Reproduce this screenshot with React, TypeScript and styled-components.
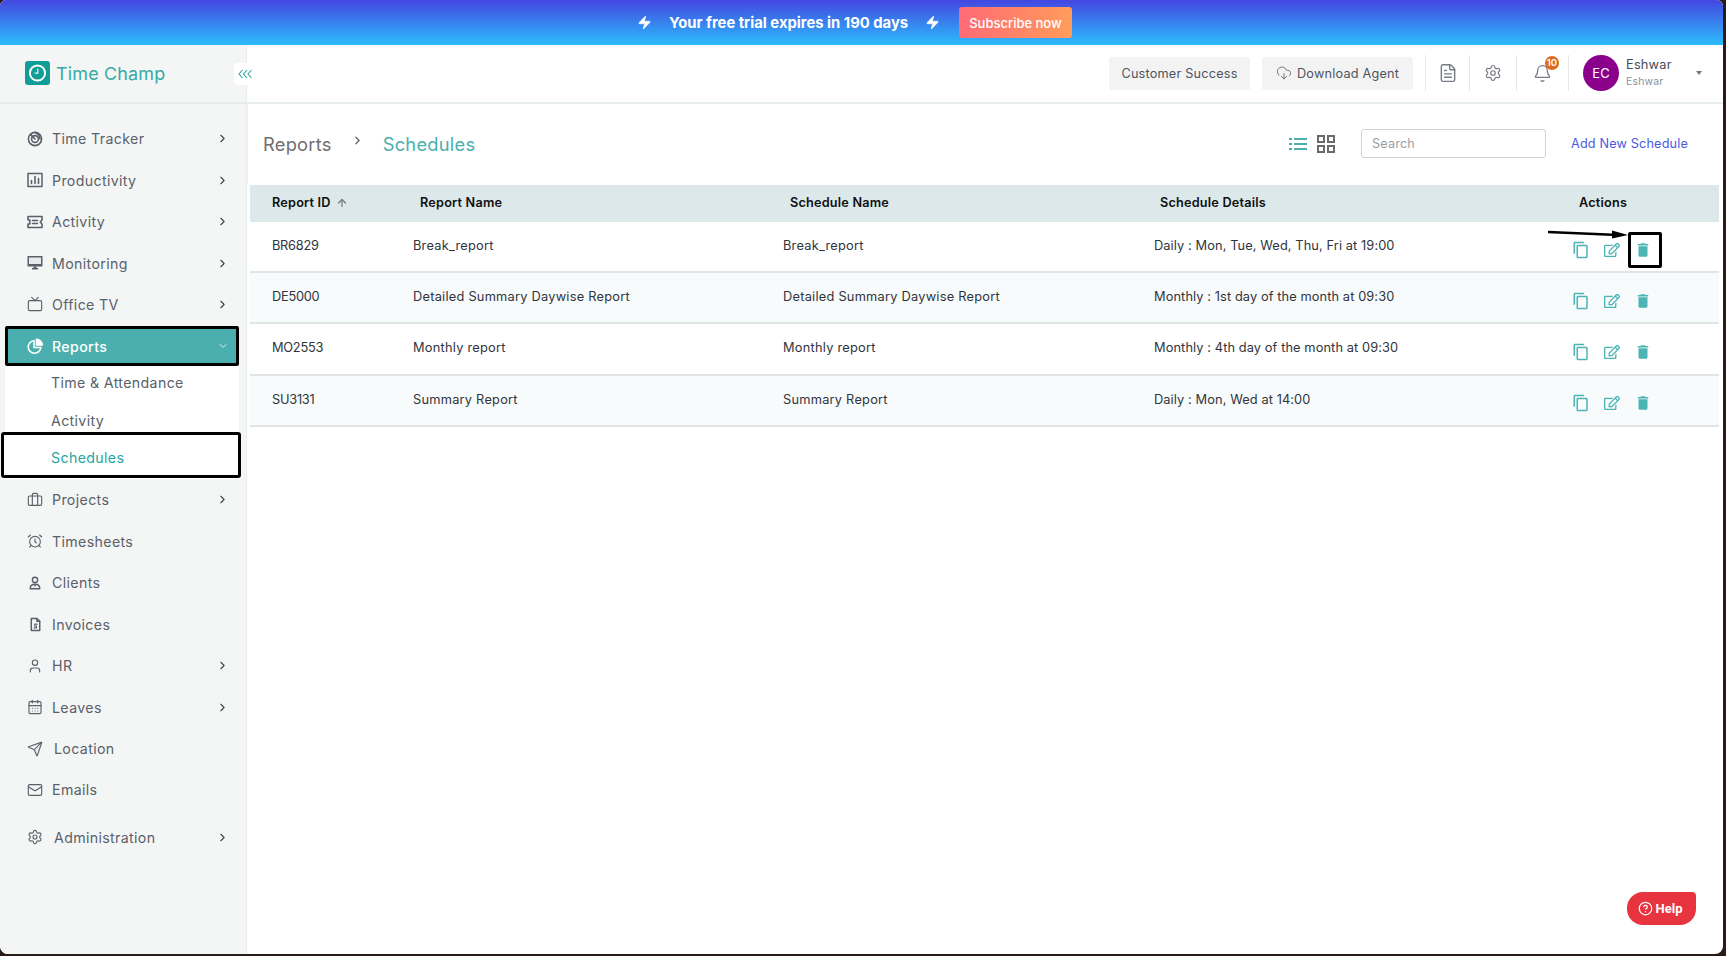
import React from "react";
import styled, { createGlobalStyle } from "styled-components";
import { ChevronRight, ChevronDown, AlarmClock, User, Send, Mail, Tv, Briefcase, CalendarDays, Bell, CloudDownload, FileText, ArrowUp, CircleHelp, Zap, Settings } from "lucide-react";
import { MdOutlineContentCopy, MdDelete } from "react-icons/md";
import { FaRegEdit } from "react-icons/fa";

const Global = createGlobalStyle`
  html, body { margin: 0; padding: 0; height: 100%; background: #2a1a18; overflow: hidden; }
  body { font-family: Inter, "Open Sans", sans-serif; }
  *, *::before, *::after { box-sizing: border-box; }
`;

const Frame = styled.div`
  position: relative; width: 1723px; height: 954px; background: #fff;
  border-radius: 6px 6px 8px 8px; overflow: hidden;
  display: flex; flex-direction: column;
`;
const Banner = styled.div`
  height: 45px; flex: none; background: linear-gradient(180deg, #4347e0 0%, #2cbcfc 100%);
  display: flex; align-items: center; padding-left: 637px; color: #fff;
`;
const BannerText = styled.span`
  font-weight: 700; font-size: 14.8px; width: 238px; margin: 0 18px 0 17px; white-space: nowrap;
`;
const Subscribe = styled.button`
  width: 113px; height: 31px; margin-left: 19px; border: 0; border-radius: 3px; color: #fff;
  font: 500 13px Inter, sans-serif; background: linear-gradient(90deg, #ff6a75, #ff9c5b);
`;
const Body = styled.div`flex: 1; display: flex; min-height: 0;`;
const Sidebar = styled.aside`
  width: 247px; flex: none; background: #f4f6f6; border-right: 1px solid #e8eded; position: relative;
`;
const Brand = styled.div`
  height: 59px; border-bottom: 2px solid #e9eded; display: flex; align-items: center; padding: 0 0 1px 25px; gap: 6px;
  color: #36aaa3; font-size: 17.9px; letter-spacing: .2px;
`;
const Collapse = styled.div`
  position: absolute; left: 234px; top: 18px; width: 23px; height: 22px; background: #fff; border-radius: 4px;
  display: flex; align-items: center; justify-content: center; z-index: 3;
`;
const Nav = styled.nav`padding-top: 14px; display: flex; flex-direction: column;`;
const Item = styled.div<{ $active?: boolean; $gap?: boolean }>`
  height: 41.45px; display: flex; align-items: center; padding: 0 17px 0 27px; font-size: 14.2px; letter-spacing: .35px; flex: none;
  color: ${p => (p.$active ? "#fff" : "#5a616a")};
  margin-top: ${p => (p.$gap ? "6px" : 0)};
  ${p => p.$active && `
    background: #4aafae; margin: 1px 7px 0 5px; height: 40px; position: relative; z-index: 1;
    border: 3px solid #000; border-radius: 2px; font-weight: 500; padding-left: 19px; padding-right: 7px;
  `}
`;
const ItemIcon = styled.span`width: 16px; height: 16px; flex: none; display: flex; align-items: center; justify-content: center;`;
const ItemLabel = styled.span<{ $wide?: boolean }>`flex: 1; margin-left: ${p => (p.$wide ? "11px" : "9px")}; white-space: nowrap;`;
const SubList = styled.div`margin: -2px 7px 0 5px; background: #fff; display: flex; flex-direction: column;`;
const SubItem = styled.div<{ $active?: boolean }>`
  height: 37.5px; display: flex; align-items: center; padding-left: 46px; font-size: 14.2px; letter-spacing: .35px; flex: none;
  color: ${p => (p.$active ? "#27a79f" : "#5a616a")}; position: relative;
  ${p => p.$active && `
    margin: -7px -2px 1px -4px; padding: 5px 0 0 47px; height: 46px; background: #fff;
    border: 3px solid #000; border-radius: 3px;
  `}
`;
const Main = styled.main`flex: 1; min-width: 0; display: flex; flex-direction: column; position: relative;`;
const Topbar = styled.header`
  height: 59px; flex: none; border-bottom: 2px solid #e8eded; display: flex; align-items: center; padding: 0 0 1px 862px;
`;
const TopBtn = styled.div<{ $w: number }>`
  width: ${p => p.$w}px; height: 33px; background: #f3f3f3; border-radius: 3px; margin-right: 12px;
  display: flex; align-items: center; justify-content: center; gap: 5px; font-size: 12.7px; color: #4d5560; white-space: nowrap; letter-spacing: .2px;
`;
const TopIcon = styled.div<{ $w: number }>`
  width: ${p => p.$w}px; height: 36px; border-left: 1px solid #e6e8e8; display: flex; align-items: center; justify-content: center; position: relative;
`;
const Badge = styled.span`
  position: absolute; left: 28px; top: 1px; width: 14px; height: 14px; border-radius: 50%; background: #dd6a1c; color: #fff;
  font-size: 9.5px; font-weight: 600; line-height: 14px; text-align: center;
`;
const UserBox = styled.div`flex: 1; height: 36px; border-left: 1px solid #e6e8e8; display: flex; align-items: center; padding-left: 14px;`;
const Avatar = styled.div`
  width: 36px; height: 36px; border-radius: 50%; background: #8b008b; color: #fff; font-size: 13px;
  display: flex; align-items: center; justify-content: center;
`;
const UserText = styled.div`margin-left: 7px; width: 70px; display: flex; flex-direction: column; gap: 1px;`;
const UserName = styled.div`font-size: 12.8px; color: #444b55; line-height: 16px; letter-spacing: .2px;`;
const UserSub = styled.div`font-size: 10.4px; color: #8d929a; line-height: 15px; letter-spacing: .2px;`;
const Caret = styled.span`width: 0; height: 0; border-left: 3.5px solid transparent; border-right: 3.5px solid transparent; border-top: 4px solid #777;`;
const PageHead = styled.div`
  height: 81px; flex: none; display: flex; align-items: center; padding: 0 35px 2px 15px; margin-left: 1px; box-shadow: -1px 0 0 #eef1f1;
`;
const Crumb = styled.span`font-size: 18.3px; color: #6f6f6f; letter-spacing: .25px;`;
const CrumbActive = styled(Crumb)`color: #48b0ae;`;
const CrumbSep = styled.span`width: 51px; display: flex; justify-content: center; margin-bottom: 6px;`;
const ViewToggles = styled.div`margin-left: auto; display: flex; align-items: center; gap: 10px; margin-right: 26px;`;
const Search = styled.input`
  width: 185px; height: 29px; border: 1px solid #cfd2d4; border-radius: 3px; padding: 0 10px; font: 12.6px Inter, sans-serif; outline: none;
  letter-spacing: .2px;
  &::placeholder { color: #9a9ea3; }
`;
const AddLink = styled.a`margin-left: 25px; font-size: 12.7px; color: #4a5be2; white-space: nowrap; letter-spacing: .15px;`;
const Table = styled.div`margin: 0 4px 0 3px; display: flex; flex-direction: column;`;
const HeadRow = styled.div`
  display: grid; grid-template-columns: 143px 370px 371px 421px 1fr; height: 37px; align-items: center; background: #dce8e9; padding-bottom: 2px;
`;
const HeadCell = styled.div<{ $p: number }>`
  padding-left: ${p => p.$p}px; font-size: 12.7px; font-weight: 600; color: #111; display: flex; align-items: center; gap: 5px; letter-spacing: .2px;
`;
const Row = styled.div<{ $alt?: boolean }>`
  display: grid; grid-template-columns: 143px 370px 371px 421px 1fr; height: 51.2px; border-bottom: 2px solid #e2e5e7; align-items: center;
  background: ${p => (p.$alt ? "#f8fbfb" : "#fff")};
`;
const Cell = styled.div<{ $p: number; $ls?: number }>`
  padding-left: ${p => p.$p}px; padding-bottom: 2px; font-size: 12.8px; color: #30353d; white-space: nowrap;
  letter-spacing: ${p => p.$ls ?? 0.24}px;
`;
const Actions = styled.div`display: flex; align-items: center; padding-left: 17px; gap: 13px; margin-top: 6px; color: #4bb5b5; position: relative;`;
const ActionBtn = styled.span<{ $marked?: boolean }>`
  width: 18px; height: 18px; display: flex; align-items: center; justify-content: center; position: relative;
  ${p => p.$marked && `
    &::after { content: ""; position: absolute; left: -6px; top: -9px; width: 34px; height: 36px; border: 3px solid #000; border-radius: 2px; }
  `}
`;
const Arrow = styled.svg`position: absolute; left: 1301px; pointer-events: none; top: 184px;`;
const Help = styled.div`
  position: absolute; right: 27px; bottom: 29px; width: 69px; height: 33px; background: #e8343f; color: #fff;
  border-radius: 16px 4px 16px 16px; display: flex; align-items: center; justify-content: center; gap: 3px; padding-right: 3px;
  font: 700 13px Roboto, sans-serif;
`;

const s = { fill: "none", stroke: "#5a616a", strokeWidth: 1.6, strokeLinecap: "round" as const, strokeLinejoin: "round" as const };
const Ic = ({ children, size = 16 }: { children: React.ReactNode; size?: number }) => (
  <svg width={size} height={size} viewBox="0 0 16 16" {...s}>{children}</svg>
);
const Radar = () => <Ic><circle cx="8" cy="8" r="6.6" /><circle cx="8" cy="8" r="3.4" /><path d="M3.6 3.6 L8 8 M8 1.4c3 1.500 4.800 4 5 6.600" /></Ic>;
const Bars = () => <Ic><rect x="1" y="1.500" width="14" height="13" strokeWidth="1.500" /><path d="M4.500 11.500V8.500M8 11.500V4.500M11.500 11.500V6.500" /></Ic>;
const Ticket = () => <Ic><path d="M1 2.500h14v3.500l-1.800 2 1.800 2v3.500H1v-3.500h1.800V6H1z" /><path d="M5.500 6.500h5M5.500 9.500h5" /></Ic>;
const Monitor = () => (
  <svg width="16" height="16" viewBox="0 0 16 16"><rect x="0.500" y="1" width="15" height="10.500" rx=".6" fill="#5a616a" /><rect x="2" y="2.500" width="12" height="6.500" fill="#e7eaea" /><path d="M6.500 11.500h3v1.500h1.500v1.500H5V13h1.500z" fill="#5a616a" /></svg>
);
const Pie = () => <svg width="17" height="17" viewBox="0 0 16 16" fill="none" stroke="#fff" strokeWidth="1.600"><path d="M7 2.200a6.300 6.300 0 1 0 6.800 6.800H7z" /><path d="M9.500.8a6 6 0 0 1 5.700 5.700H9.500z" fill="#fff" /></svg>;
const Client = () => <Ic size={14}><circle cx="8" cy="4.500" r="3" /><path d="M2.500 14.500c0-4 2.500-5 5.500-5s5.500 1 5.500 5z" /><path d="M8 9.500v2" /></Ic>;
const Invoice = () => <Ic size={15}><path d="M3.500 1.500h6l3 3v10h-9z" /><path d="M9.500 1.500v3h3" /><path d="M9.700 7.600H7.200v2h1.800v2H6.500" strokeWidth="1.200" /></Ic>;
const Logo = () => (
  <svg width="25" height="25" viewBox="0 0 25 25">
    <rect width="25" height="24" rx="3" fill="#0f9d95" />
    <circle cx="12.500" cy="12" r="7.600" fill="none" stroke="#fff" strokeWidth="2" />
    <path d="M12.800 7.800v4.400H9.600" fill="none" stroke="#e8f6f5" strokeWidth="1.200" />
  </svg>
);
const Triple = () => (
  <svg width="15" height="10" viewBox="0 0 15 10" fill="none" stroke="#2fa9a6" strokeWidth="1.100"><path d="M4.500 1 1 5l3.500 4M9 1 5.500 5 9 9M13.500 1 10 5l3.500 4" /></svg>
);
const ListView = () => (
  <svg width="18" height="14" viewBox="0 0 18 14" fill="#4bb0ac"><rect x="0" y="1" width="3" height="2" /><rect x="5" y="1" width="13" height="2" /><rect x="0" y="6" width="3" height="2" /><rect x="5" y="6" width="13" height="2" /><rect x="0" y="11" width="3" height="2" /><rect x="5" y="11" width="13" height="2" /></svg>
);
const GridView = () => (
  <svg width="18" height="18" viewBox="0 0 18 18" fill="none" stroke="#6b6b6b" strokeWidth="2"><rect x="1" y="1" width="6" height="6" /><rect x="11" y="1" width="6" height="6" /><rect x="1" y="11" width="6" height="6" /><rect x="11" y="11" width="6" height="6" /></svg>
);
const Bolt = () => <Zap size={15} color="#fff" fill="#fff" strokeWidth={1} />;
const Chev = () => <ChevronRight size={13} color="#444" strokeWidth={2} />;

const lu = { size: 16, color: "#5a616a", strokeWidth: 1.7 };
type Entry = { label: string; icon: React.ReactNode; arrow?: boolean; wide?: boolean; gap?: boolean };
const before: Entry[] = [
  { label: "Time Tracker", icon: <Radar />, arrow: true },
  { label: "Productivity", icon: <Bars />, arrow: true },
  { label: "Activity", icon: <Ticket />, arrow: true },
  { label: "Monitoring", icon: <Monitor />, arrow: true },
  { label: "Office TV", icon: <Tv {...lu} />, arrow: true },
];
const after: Entry[] = [
  { label: "Projects", icon: <Briefcase {...lu} />, arrow: true },
  { label: "Timesheets", icon: <AlarmClock {...lu} /> },
  { label: "Clients", icon: <Client /> },
  { label: "Invoices", icon: <Invoice /> },
  { label: "HR", icon: <User {...lu} />, arrow: true },
  { label: "Leaves", icon: <CalendarDays {...lu} />, arrow: true },
  { label: "Location", icon: <Send {...lu} />, wide: true },
  { label: "Emails", icon: <Mail {...lu} /> },
  { label: "Administration", icon: <Settings {...lu} />, arrow: true, wide: true, gap: true },
];
const rows = [
  ["BR6829", "Break_report", "Break_report", "Daily : Mon, Tue, Wed, Thu, Fri at 19:00"],
  ["DE5000", "Detailed Summary Daywise Report", "Detailed Summary Daywise Report", "Monthly : 1st day of the month at 09:30"],
  ["MO2553", "Monthly report", "Monthly report", "Monthly : 4th day of the month at 09:30"],
  ["SU3131", "Summary Report", "Summary Report", "Daily : Mon, Wed at 14:00"],
];
const NavEntry = ({ e }: { e: Entry }) => (
  <Item $gap={e.gap}>
    <ItemIcon>{e.icon}</ItemIcon>
    <ItemLabel $wide={e.wide}>{e.label}</ItemLabel>
    {e.arrow && <Chev />}
  </Item>
);

export default function App() {
  return (
    <Frame>
      <Global />
      <Banner>
        <Bolt />
        <BannerText>Your free trial expires in 190 days</BannerText>
        <Bolt />
        <Subscribe>Subscribe now</Subscribe>
      </Banner>
      <Body>
        <Sidebar>
          <Brand><Logo />Time Champ</Brand>
          <Collapse><Triple /></Collapse>
          <Nav>
            {before.map(e => <NavEntry key={e.label} e={e} />)}
            <Item $active>
              <ItemIcon><Pie /></ItemIcon>
              <ItemLabel>Reports</ItemLabel>
              <ChevronDown size={12} color="#d8f0ef" />
            </Item>
            <SubList>
              <SubItem>Time &amp; Attendance</SubItem>
              <SubItem>Activity</SubItem>
              <SubItem $active>Schedules</SubItem>
            </SubList>
            {after.map(e => <NavEntry key={e.label} e={e} />)}
          </Nav>
        </Sidebar>
        <Main>
          <Topbar>
            <TopBtn $w={141}>Customer Success</TopBtn>
            <TopBtn $w={151}><CloudDownload size={16} color="#777" strokeWidth={1.5} />Download Agent</TopBtn>
            <TopIcon $w={44}><FileText size={20} color="#777b85" strokeWidth={1.7} /></TopIcon>
            <TopIcon $w={47}><Settings size={18} color="#777b85" strokeWidth={1.6} /></TopIcon>
            <TopIcon $w={52}><Bell size={19} color="#777b85" strokeWidth={1.6} /><Badge>10</Badge></TopIcon>
            <UserBox>
              <Avatar>EC</Avatar>
              <UserText><UserName>Eshwar</UserName><UserSub>Eshwar</UserSub></UserText>
              <Caret />
            </UserBox>
          </Topbar>
          <PageHead>
            <Crumb>Reports</Crumb>
            <CrumbSep><ChevronRight size={13} color="#666" strokeWidth={2.4} /></CrumbSep>
            <CrumbActive>Schedules</CrumbActive>
            <ViewToggles>
              <ListView />
              <GridView />
            </ViewToggles>
            <Search placeholder="Search" readOnly />
            <AddLink>Add New Schedule</AddLink>
          </PageHead>
          <Table>
            <HeadRow>
              <HeadCell $p={22}>Report ID <ArrowUp size={12} color="#777" strokeWidth={2.4} /></HeadCell>
              <HeadCell $p={27}>Report Name</HeadCell>
              <HeadCell $p={27}>Schedule Name</HeadCell>
              <HeadCell $p={26}>Schedule Details</HeadCell>
              <HeadCell $p={24}>Actions</HeadCell>
            </HeadRow>
            {rows.map((r, i) => (
              <Row key={r[0]} $alt={i % 2 === 1}>
                <Cell $p={22} $ls={-0.25}>{r[0]}</Cell>
                <Cell $p={20}>{r[1]}</Cell>
                <Cell $p={20}>{r[2]}</Cell>
                <Cell $p={20} $ls={0.1}>{r[3]}</Cell>
                <Actions>
                  <ActionBtn><MdOutlineContentCopy size={18} /></ActionBtn>
                  <ActionBtn><FaRegEdit size={16} /></ActionBtn>
                  <ActionBtn $marked={i === 0}><MdDelete size={18} /></ActionBtn>
                </Actions>
              </Row>
            ))}
          </Table>
          <Arrow width="84" height="12" viewBox="0 0 84 12">
            <path d="M0 3 L70 6" stroke="#000" strokeWidth="2.500" />
            <path d="M64 1.500 L80 6 L64 9.500z" fill="#000" />
          </Arrow>
          <Help><CircleHelp size={15} strokeWidth={2} />Help</Help>
        </Main>
      </Body>
    </Frame>
  );
}
